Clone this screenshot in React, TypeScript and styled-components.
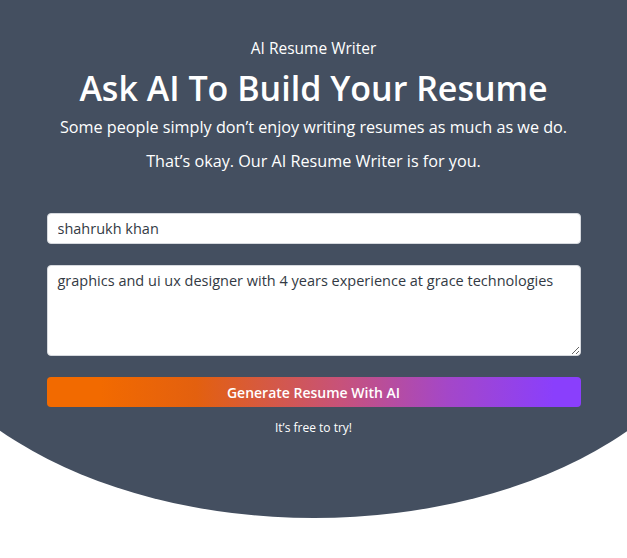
import { useState } from "react";
import styled, { createGlobalStyle } from "styled-components";

const GlobalStyle = createGlobalStyle`
  body {
    margin: 0;
    background: #ffffff;
    font-family: "Open Sans", "Noto Sans", sans-serif;
  }
`;

function App() {
  const [name, setName] = useState("shahrukh khan");
  const [about, setAbout] = useState(
    "graphics and ui ux designer with 4 years experience at grace technologies"
  );

  return (
    <STPage>
      <GlobalStyle />
      <STHero>
        <STInner>
          <STEyebrow>AI Resume Writer</STEyebrow>
          <STTitle>Ask AI To Build Your Resume</STTitle>
          <STLead>Some people simply don’t enjoy writing resumes as much as we do.</STLead>
          <STLead $gap>That’s okay. Our AI Resume Writer is for you.</STLead>
          <STForm onSubmit={(e) => e.preventDefault()}>
            <STInput
              type="text"
              value={name}
              onChange={(e) => setName(e.target.value)}
            />
            <STTextArea value={about} onChange={(e) => setAbout(e.target.value)} />
            <STButton type="submit">Generate Resume With AI</STButton>
          </STForm>
          <STNote>It’s free to try!</STNote>
        </STInner>
      </STHero>
    </STPage>
  );
}

const STPage = styled.div`
  display: flex;
  justify-content: center;
  width: 100%;
  overflow: hidden;
  height: 558px;
`;

const STHero = styled.section`
  flex: 0 0 840px;
  height: 518px;
  background: #444f60;
  border-bottom-left-radius: 420px 260px;
  border-bottom-right-radius: 420px 260px;
  display: flex;
  justify-content: center;
`;

const STInner = styled.div`
  width: 534px;
  padding-top: 39px;
  display: flex;
  flex-direction: column;
  align-items: center;
  color: #ffffff;
  text-align: center;
`;

const STEyebrow = styled.p`
  margin: 0;
  font-size: 15.5px;
  line-height: 19px;
`;

const STTitle = styled.h1`
  margin: 10px 0 0;
  font-size: 34px;
  font-weight: 600;
  line-height: 40px;
  white-space: nowrap;
`;

const STLead = styled.p<{ $gap?: boolean }>`
  margin: ${(p) => (p.$gap ? "14px" : "9px")} 0 0;
  font-size: 16.2px;
  line-height: 20px;
  white-space: nowrap;
`;

const STForm = styled.form`
  width: 100%;
  margin-top: 42px;
  display: flex;
  flex-direction: column;
`;

const STInput = styled.input`
  box-sizing: border-box;
  height: 31px;
  width: 100%;
  padding: 0 10px;
  border: 1px solid #d6d9de;
  border-radius: 4px;
  background: #ffffff;
  color: #333a44;
  font-family: inherit;
  font-size: 14.5px;
  outline: none;
`;

const STTextArea = styled.textarea`
  box-sizing: border-box;
  height: 91px;
  width: 100%;
  margin-top: 21px;
  padding: 5px 10px;
  border: 1px solid #d6d9de;
  border-radius: 4px;
  background: #ffffff;
  color: #333a44;
  font-family: inherit;
  font-size: 14.5px;
  line-height: 20px;
  resize: vertical;
  outline: none;
`;

const STButton = styled.button`
  height: 30px;
  width: 100%;
  margin-top: 21px;
  border: none;
  border-radius: 4px;
  background: linear-gradient(
    to right,
    #f26a00 10%,
    #e3600f 28%,
    #c7527a 55%,
    #a447c8 75%,
    #8a3ffc 95%
  );
  color: #ffffff;
  font-family: inherit;
  font-size: 14px;
  font-weight: 600;
  cursor: pointer;
`;

const STNote = styled.p`
  margin: 13px 0 0;
  font-size: 12px;
  line-height: 16px;
`;

export default App;
